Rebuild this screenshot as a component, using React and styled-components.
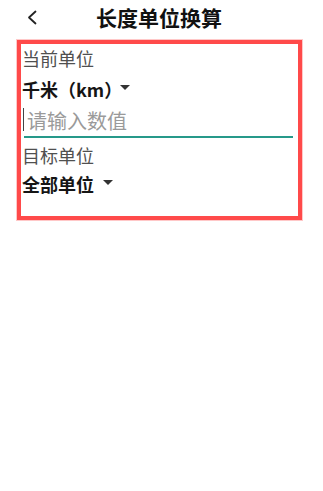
import styled, { createGlobalStyle } from "styled-components";

const GlobalStyle = createGlobalStyle`
  html, body {
    margin: 0;
    padding: 0;
    background: #fff;
  }
  body {
    font-family: "Noto Sans CJK SC", "Noto Sans", Roboto, sans-serif;
    color: #222;
  }
`;

const Page = styled.div`
  width: 323px;
  min-height: 491px;
  background: #fff;
`;

const Header = styled.header`
  height: 34px;
  display: flex;
  align-items: center;
  padding-left: 27px;
  gap: 59px;
`;

const BackButton = styled.button`
  border: none;
  background: none;
  padding: 0;
  width: 10px;
  height: 16px;
  display: flex;
  align-items: center;
  cursor: pointer;
`;

const Title = styled.h1`
  margin: 0;
  font-size: 21px;
  font-weight: 700;
  color: #111;
  line-height: 34px;
`;

const Panel = styled.section`
  box-sizing: border-box;
  margin: 6px 0 0 17px;
  width: 285px;
  border: 4px solid #ff4a4a;
  box-shadow: 0 0 0 1px rgba(255, 74, 74, 0.3);
  padding: 0 0 18px 1px;
`;

const Label = styled.div`
  font-size: 18px;
  line-height: 29px;
  color: #505050;
  margin-top: ${(p) => (p.$spaced ? "3px" : "0")};
`;

const Spinner = styled.div`
  display: flex;
  align-items: center;
  font-size: 18px;
  font-weight: 700;
  color: #151515;
  line-height: ${(p) => p.$height}px;
`;

const Arrow = styled.span`
  width: 0;
  height: 0;
  border-left: 5px solid transparent;
  border-right: 5px solid transparent;
  border-top: 5px solid #333;
  margin-top: -3px;
  margin-left: ${(p) => p.$offset}px;
`;

const Field = styled.div`
  position: relative;
  margin: 0 5px 0 2px;
  border-bottom: 2px solid #26998a;
  height: 31px;
  display: flex;
  align-items: center;

  &::before {
    content: "";
    position: absolute;
    left: -1px;
    top: 3px;
    width: 1px;
    height: 23px;
    background: #444;
  }
`;

const Input = styled.input`
  border: none;
  outline: none;
  background: transparent;
  padding: 0 0 0 3px;
  width: 100%;
  height: 31px;
  font-family: inherit;
  font-size: 20px;
  color: #222;

  &::placeholder {
    color: #9a9a9a;
  }
`;

export default function App() {
  return (
    <Page>
      <GlobalStyle />
      <Header>
        <BackButton aria-label="返回">
          <svg width="10" height="15" viewBox="0 0 10 15">
            <polyline
              points="8.5,1.5 2,7.5 8.5,13.5"
              fill="none"
              stroke="#222"
              strokeWidth="1.8"
              strokeLinecap="round"
              strokeLinejoin="round"
            />
          </svg>
        </BackButton>
        <Title>长度单位换算</Title>
      </Header>
      <Panel>
        <Label>当前单位</Label>
        <Spinner $height={32}>
          千米（km）
          <Arrow $offset={-2} />
        </Spinner>
        <Field>
          <Input placeholder="请输入数值" />
        </Field>
        <Label $spaced>目标单位</Label>
        <Spinner $height={28}>
          全部单位
          <Arrow $offset={9} />
        </Spinner>
      </Panel>
    </Page>
  );
}
